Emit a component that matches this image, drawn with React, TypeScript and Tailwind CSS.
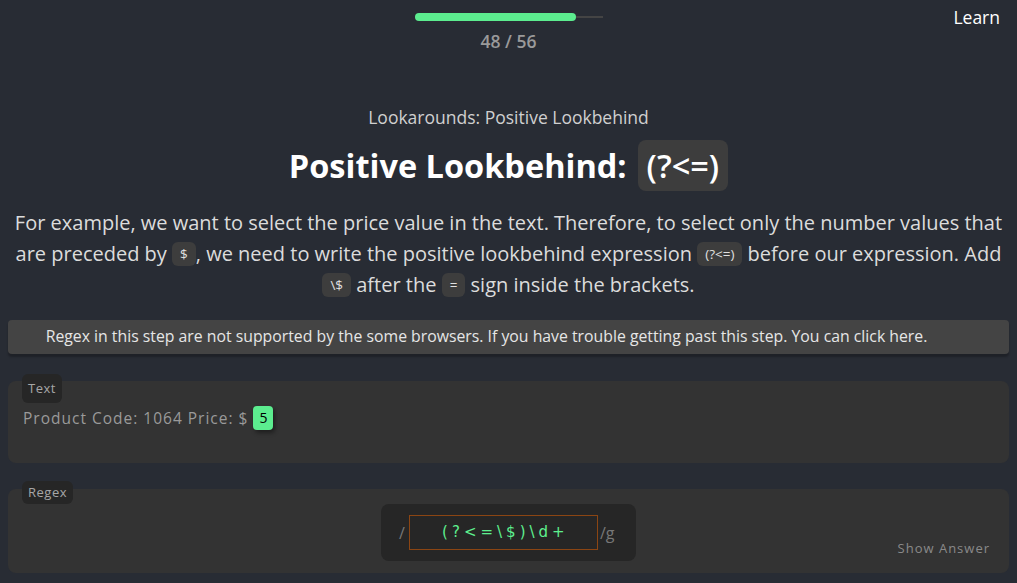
import React from "react";

const Code = ({ children }: { children: React.ReactNode }) => (
  <span className="inline-block rounded-[6px] bg-[#3d3d3d] px-[8px] py-[2px] text-[13.5px] leading-[20px] align-[2px] text-[#e0e0e0]">
    {children}
  </span>
);

export default function App() {
  return (
    <div
      className="w-[1017px] h-[583px] overflow-hidden bg-[#282c34] text-white relative"
      style={{ fontFamily: '"Open Sans", "Noto Sans", sans-serif' }}
    >
      {/* header */}
      <div className="relative h-[60px]">
        <div className="flex flex-col items-center pt-[13px]">
          <div className="relative w-[188px] h-[8px] flex items-center">
            <div className="absolute left-0 right-0 h-[2px] bg-[#444]" />
            <div className="relative h-[8px] w-[161px] rounded-full bg-[#5ced8f]" />
          </div>
          <div className="mt-[8px] text-[17.5px] font-semibold text-[#9a9a9a] leading-[24px]">48 / 56</div>
        </div>
        <div className="absolute right-[17px] top-[5px] text-[17.5px] leading-[24px] text-white">Learn</div>
      </div>

      <div className="mt-[45px] text-center text-[17.5px] leading-[24px] text-[#d0d0d0]">
        Lookarounds: Positive Lookbehind
      </div>
      <div className="mt-[11px] flex justify-center items-center text-[32.5px] font-bold leading-[51px]">
        <span>Positive Lookbehind:</span>
        <span className="ml-[11px] rounded-[8px] bg-[#3d3d3d] px-[9px] font-semibold leading-[51px]">(?&lt;=)</span>
      </div>
      <p className="mt-[16px] px-[10px] text-center text-[20px] leading-[31px] text-[#dcdcdc]">
        For example, we want to select the price value in the text. Therefore, to select only the number values that are preceded by <Code>$</Code>, we need to write the positive lookbehind expression <Code>(?&lt;=)</Code> before our expression. Add <Code>\$</Code> after the <Code>=</Code> sign inside the brackets.
      </p>

      <div className="mx-[8px] mt-[20px] h-[34px] rounded-[4px] bg-[#444444] shadow-[0_3px_2px_rgba(0,0,0,0.25)] flex items-center justify-center pr-[44px] text-[15.8px] text-[#e6e6e6]">
        Regex in this step are not supported by the some browsers. If you have trouble getting past this step. You can click here.
      </div>

      {/* Text panel */}
      <div className="relative mx-[8px] mt-[27px] h-[82px] rounded-[8px] bg-[#333333]">
        <div className="absolute left-[14px] top-[-7px] rounded-[6px] bg-[#262626] px-[6px] text-[13px] leading-[29px] tracking-[0.5px] text-[#a6a6a6]">
          Text
        </div>
        <div className="absolute left-[15px] top-[25px] flex items-center text-[15.5px] tracking-[1px] text-[#9a9a9a] leading-[24px]">
          <span>Product Code: 1064 Price: $</span>
          <span className="ml-[5px] rounded-[4px] bg-[#5ced8f] px-[6px] text-[14px] leading-[24px] tracking-normal text-black shadow-[2px_3px_4px_rgba(0,0,0,0.4)]">5</span>
        </div>
      </div>

      {/* Regex panel */}
      <div className="relative mx-[8px] mt-[26px] h-[84px] rounded-[8px] bg-[#333333]">
        <div className="absolute left-[14px] top-[-8px] rounded-[6px] bg-[#262626] px-[6px] text-[13px] leading-[23px] tracking-[0.5px] text-[#a6a6a6]">
          Regex
        </div>
        <div className="absolute left-[373px] top-[15px] w-[255px] h-[57px] rounded-[8px] bg-[#262626] flex items-center">
          <span className="ml-[18px] mr-[4px] text-[16px] text-[#777]">/</span>
          <div className="w-[189px] h-[35px] border border-solid border-[#8b4513] flex items-center justify-center pl-[4px] text-[15px] tracking-[4px] text-[#5ef08f]" style={{ fontFamily: '"DejaVu Sans", sans-serif' }}>
            (?&lt;=\$)\d+
          </div>
          <span className="ml-[2px] text-[16px] text-[#777]">/g</span>
        </div>
        <div className="absolute right-[19px] top-[50px] text-[13px] tracking-[1px] text-[#8a8a8a]">Show Answer</div>
      </div>
    </div>
  );
}
